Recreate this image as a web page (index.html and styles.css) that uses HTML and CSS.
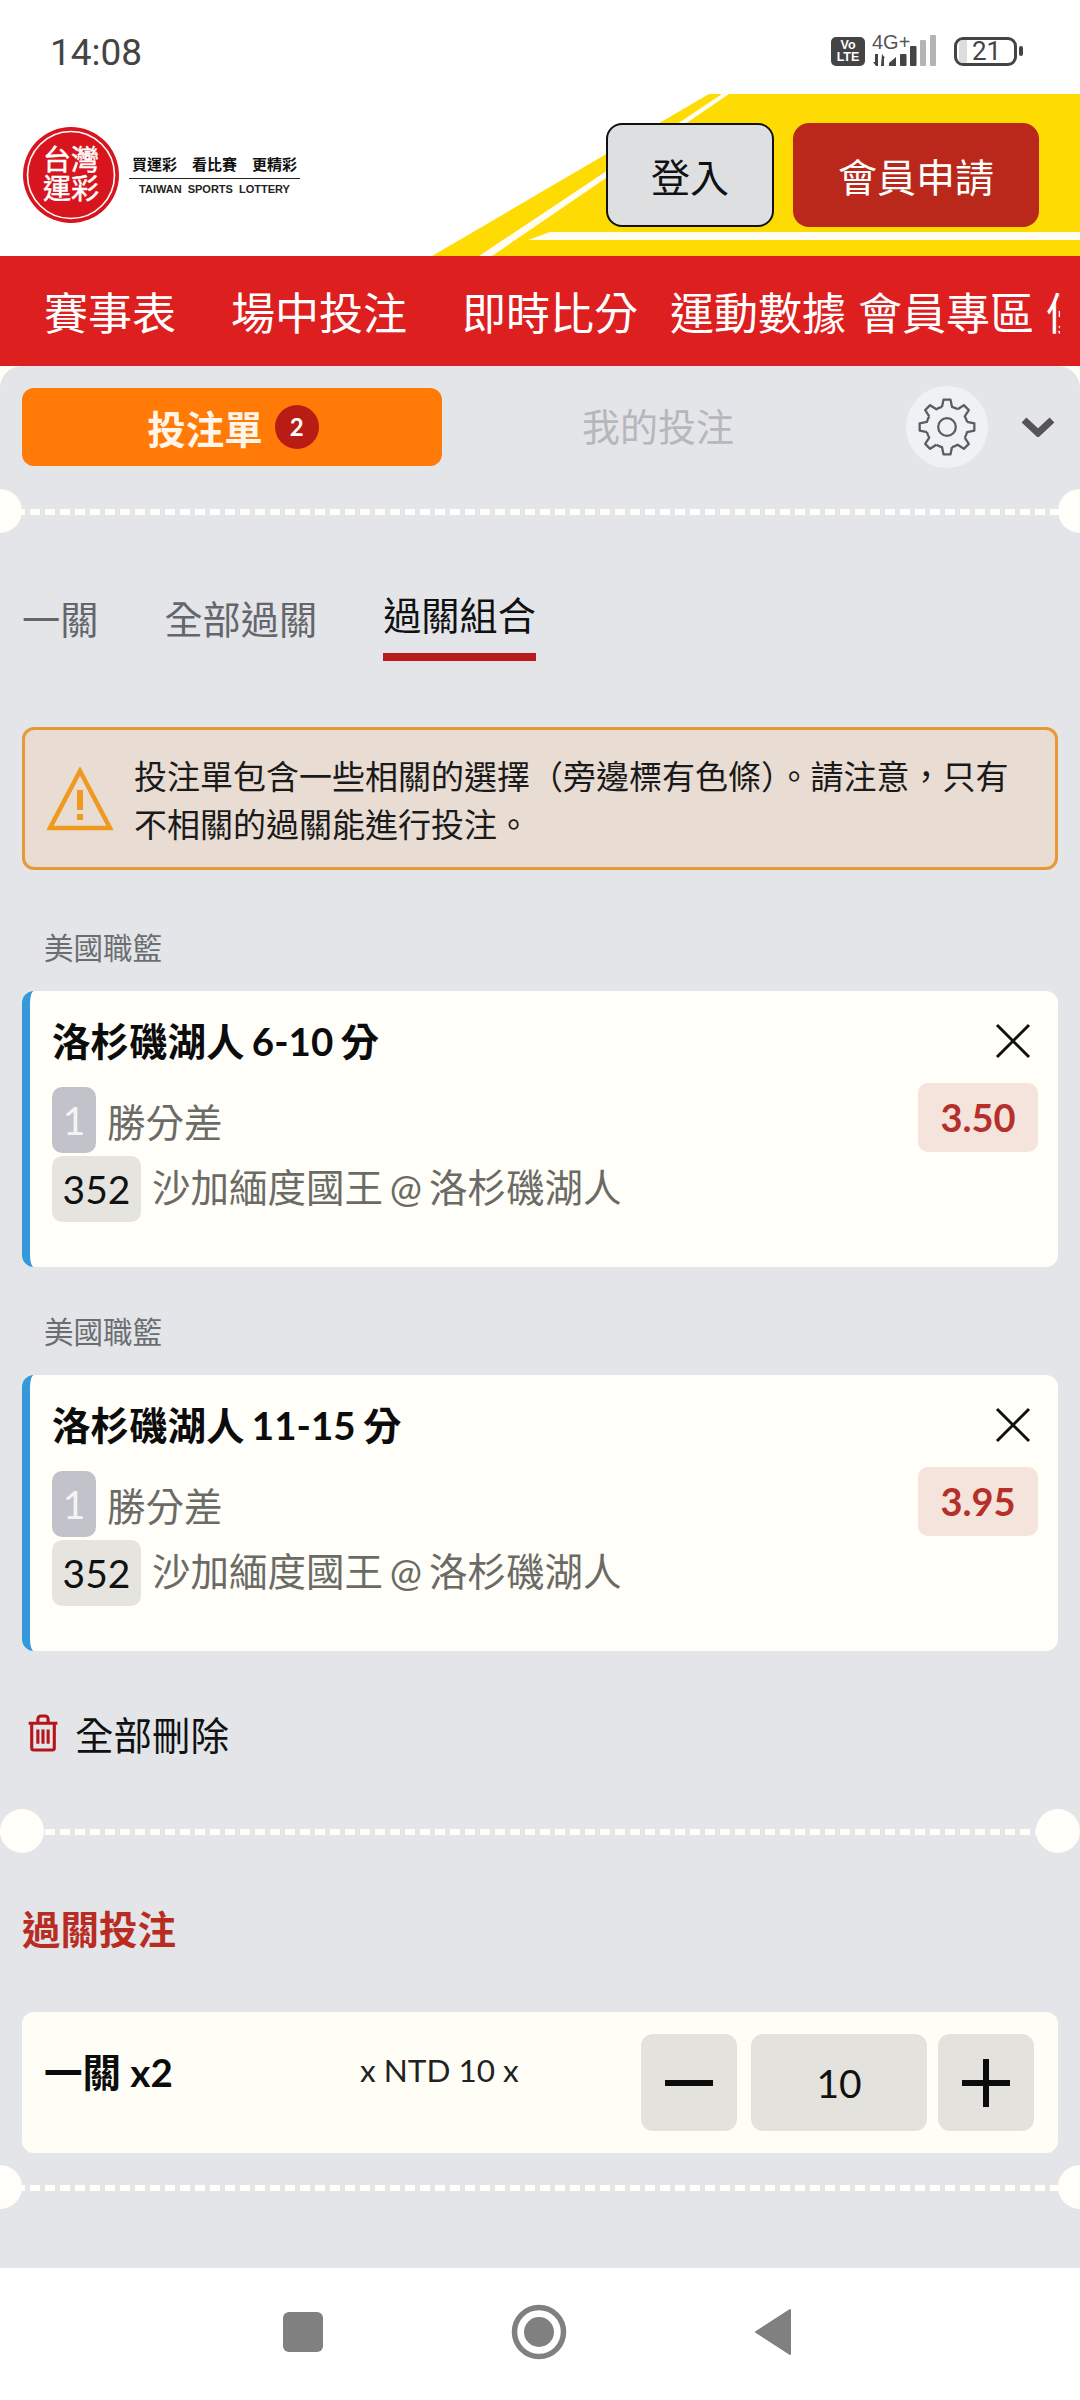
FILE: index.html
```html
<!DOCTYPE html>
<html lang="zh-Hant">
<head>
<meta charset="utf-8">
<title>投注單</title>
<link rel="stylesheet" href="styles.css">
</head>
<body>
<div class="phone">
  <div class="status">
    <span class="time">14:08</span>
    <div class="status-icons">
      <span class="volte">Vo<br>LTE</span>
      <svg class="signal" width="70" height="38" viewBox="0 -4 70 38">
        <text x="0" y="15" class="net">4G+</text>
        <path class="sig-dark" d="M3 20h3v12H4l-3-4h2zM10 20l3 4h-1v8h-3zM24 23v9h-7v-3z"/>
        <rect class="sig-dark" x="28" y="20" width="6.5" height="12" rx="1"/>
        <rect class="sig-dark" x="38" y="12" width="6.5" height="20" rx="1"/>
        <rect class="sig-gray" x="48" y="6" width="6" height="26" rx="1"/>
        <rect class="sig-gray" x="58" y="1" width="6" height="31" rx="1"/>
      </svg>
      <div class="battery"><span class="level"></span><span class="batt-num">21</span></div>
      <span class="nub"></span>
    </div>
  </div>

  <header class="head">
    <svg class="deco" width="1080" height="162" viewBox="0 0 1080 162">
      <path class="yellow" d="M709 0H1080V162H432Z"/>
      <path class="whiteish" d="M722 0H729L492 162H479Z"/>
      <path class="whiteish" d="M550 138H1080V146H528Z"/>
    </svg>
    <div class="logo">
      <svg class="seal" width="98" height="100" viewBox="0 0 98 100">
        <circle class="seal-bg" cx="49" cy="50" r="48"/>
        <circle class="seal-ring" cx="49" cy="50" r="43.5"/>
        <text class="seal-t" x="21" y="45">台灣</text>
        <text class="seal-t" x="21" y="74">運彩</text>
      </svg>
      <div class="tag">
        <div class="tag-cn"><span>買運彩</span><span>看比賽</span><span>更精彩</span></div>
        <div class="tag-en">TAIWAN SPORTS LOTTERY</div>
      </div>
    </div>
    <div class="auth">
      <a class="btn-login">登入</a>
      <a class="btn-join">會員申請</a>
    </div>
  </header>

  <nav class="nav">
    <a class="n1">賽事表</a>
    <a class="n2">場中投注</a>
    <a class="n3">即時比分</a>
    <a class="n4">運動數據</a>
    <a class="n5">會員專區</a>
    <a class="n6">優惠</a>
  </nav>

  <main class="main">
    <div class="topbar">
      <div class="tab-slip">投注單<span class="badge">2</span></div>
      <div class="tab-mine">我的投注</div>
      <div class="gear">
        <svg width="58" height="58" viewBox="0 0 56 56">
          <defs><path id="tooth" d="M23.16 8.6 24.6 1.6H31.4L32.84 8.6A20 20 0 0 1 38.3 10.86"/></defs>
          <g class="gear-line">
            <use href="#tooth"/>
            <use href="#tooth" transform="rotate(45 28 28)"/>
            <use href="#tooth" transform="rotate(90 28 28)"/>
            <use href="#tooth" transform="rotate(135 28 28)"/>
            <use href="#tooth" transform="rotate(180 28 28)"/>
            <use href="#tooth" transform="rotate(225 28 28)"/>
            <use href="#tooth" transform="rotate(270 28 28)"/>
            <use href="#tooth" transform="rotate(315 28 28)"/>
            <circle cx="28" cy="28" r="8.5"/>
          </g>
        </svg>
      </div>
      <svg class="chev" width="34" height="20" viewBox="0 0 34 20"><path d="M3 3 17 16 31 3"/></svg>
    </div>

    <div class="sep sep-edge sep-top"></div>

    <div class="tabs">
      <a class="tab">一關</a>
      <a class="tab">全部過關</a>
      <a class="tab tab-active">過關組合</a>
    </div>

    <div class="warn">
      <svg class="warn-ico" width="66" height="64" viewBox="0 0 66 64">
        <path class="warn-tri" d="M33 4 63 61H3Z"/>
        <rect class="warn-fill" x="30" y="23" width="6" height="20"/>
        <rect class="warn-fill" x="30" y="47" width="6" height="6"/>
      </svg>
      <p class="warn-text">投注單包含一些相關的選擇（旁邊標有色條）。請注意，只有不相關的過關能進行投注。</p>
    </div>

    <div class="league first">美國職籃</div>
    <section class="slip">
      <div class="slip-title">洛杉磯湖人 6-10 分</div>
      <svg class="close" width="36" height="36" viewBox="0 0 36 36"><path d="M2 2 34 34M34 2 2 34"/></svg>
      <div class="slip-row r1"><span class="pill pill-g">1</span><span class="slip-txt">勝分差</span><span class="odds">3.50</span></div>
      <div class="slip-row r2"><span class="pill pill-n">352</span><span class="slip-txt">沙加緬度國王 @ 洛杉磯湖人</span></div>
    </section>

    <div class="league">美國職籃</div>
    <section class="slip">
      <div class="slip-title">洛杉磯湖人 11-15 分</div>
      <svg class="close" width="36" height="36" viewBox="0 0 36 36"><path d="M2 2 34 34M34 2 2 34"/></svg>
      <div class="slip-row r1"><span class="pill pill-g">1</span><span class="slip-txt">勝分差</span><span class="odds">3.95</span></div>
      <div class="slip-row r2"><span class="pill pill-n">352</span><span class="slip-txt">沙加緬度國王 @ 洛杉磯湖人</span></div>
    </section>

    <div class="delete">
      <svg class="trash" width="34" height="38" viewBox="0 0 32 37">
        <path d="M2 9H30M11 9V5a3 3 0 0 1 3-3h4a3 3 0 0 1 3 3V9M5 9V33a2 2 0 0 0 2 2H25a2 2 0 0 0 2-2V9M11 15V29M16 15V29M21 15V29"/>
      </svg>
      <span>全部刪除</span>
    </div>

    <div class="sep sep-full"></div>

    <h2 class="parlay">過關投注</h2>

    <div class="stake">
      <div class="stake-name">一關 x2</div>
      <div class="stake-mid">x NTD 10 x</div>
      <div class="stake-ctl">
        <span class="step step-minus"><svg width="50" height="50" viewBox="0 0 50 50"><path d="M1 25H49"/></svg></span>
        <span class="amount">10</span>
        <span class="step step-plus"><svg width="50" height="50" viewBox="0 0 50 50"><path d="M1 25H49M25 1V49"/></svg></span>
      </div>
    </div>

    <div class="sep sep-edge sep-bot"></div>
  </main>

  <footer class="sysnav">
    <span class="sq"></span>
    <svg class="home" width="56" height="56" viewBox="0 0 56 56"><circle class="home-o" cx="28" cy="28" r="24.5"/><circle class="home-i" cx="28" cy="28" r="15"/></svg>
    <svg class="back" width="38" height="48" viewBox="0 0 38 48"><path d="M36 2V46L2 24Z"/></svg>
  </footer>
</div>
</body>
</html>
```
FILE: styles.css
```css
* { box-sizing: border-box; }
html, body { margin: 0; padding: 0; }
body {
  width: 1080px;
  height: 2400px;
  overflow: hidden;
  background: #fff;
  font-family: Lato, "Noto Sans CJK TC", sans-serif;
  color: #111;
}
.phone { width: 1080px; height: 2400px; display: flex; flex-direction: column; background: #fff; }

/* status bar */
.status { height: 94px; flex: none; padding: 0 57px 0 50px; display: flex; align-items: center; justify-content: space-between; }
.time { font: 400 37px/1 Roboto, sans-serif; color: #444; margin-top: 10px; }
.status-icons { display: flex; align-items: center; margin-top: 8px; }
.volte { width: 34px; height: 29px; border-radius: 5px; background: #444; color: #fff; font: 700 12.5px/12.5px "Liberation Sans", sans-serif; text-align: center; padding-top: 2px; margin-right: 7px; }
.signal { margin-right: 12px; margin-top: -4px; }
.net { font: 400 20px "Liberation Sans", sans-serif; fill: #555; }
.sig-dark { fill: #444; }
.sig-gray { fill: #b4b4b4; }
.battery { width: 63px; height: 29px; border: 3px solid #444; border-radius: 9px; display: flex; align-items: center; justify-content: center; padding: 3px 0; overflow: hidden; }
.level { width: 8px; height: 23px; background: #ddd; flex: none; margin-left: 2px; }
.batt-num { font: 400 26px/1 Roboto, sans-serif; color: #444; flex: 1; text-align: center; padding-right: 8px; }
.nub { width: 4px; height: 10px; background: #444; border-radius: 2px; margin-left: 2px; }

/* header */
.head { height: 162px; flex: none; position: relative; display: flex; align-items: center; justify-content: space-between; padding: 0 41px 0 22px; }
.deco { position: absolute; left: 0; top: 0; }
.yellow { fill: #fedb03; }
.whiteish { fill: #fffdf2; }
.logo { display: flex; align-items: center; position: relative; margin-top: -1px; }
.seal { display: block; }
.seal-bg { fill: #d8141e; }
.seal-ring { fill: none; stroke: #fff; stroke-width: 1.6; }
.seal-t { font: 400 28px "Noto Sans CJK TC", sans-serif; fill: #fff; stroke: #fff; stroke-width: .5; }
.tag { margin-left: 9px; width: 171px; }
.tag-cn { display: flex; justify-content: space-between; padding: 0 3px 4px; font: 700 15px/20px "Noto Sans CJK TC", sans-serif; color: #111; border-bottom: 1.5px solid #222; }
.tag-en { font: 700 11px/14px "Liberation Sans", sans-serif; color: #222; text-align: center; word-spacing: 3px; margin-top: 3px; }
.auth { display: flex; gap: 19px; position: relative; }
.btn-login, .btn-join { height: 104px; border-radius: 16px; display: flex; align-items: center; justify-content: center; font: 400 39px "Noto Sans CJK TC", sans-serif; }
.btn-login { width: 168px; background: #dddfe1; border: 2.5px solid #111; color: #111; }
.btn-join { width: 246px; background: #b9281a; color: #fff; }

/* nav */
.nav { height: 110px; flex: none; background: #dd1f20; display: flex; align-items: center; overflow: hidden; padding-left: 44px; white-space: nowrap; }
.nav a { color: #fff; font: 400 44px "Noto Sans CJK TC", sans-serif; flex: none; }
.n1 { margin-right: 55px; }
.n2 { margin-right: 55px; }
.n3 { margin-right: 32px; }
.n4 { margin-right: 12px; }
.n5 { margin-right: 12px; }
.n6 { clip-path: inset(0 calc(100% - 14px) 0 0); }

/* main */
.main { flex: 1; position: relative; overflow: hidden; background: #fffef8; }
.main::before { content: ""; position: absolute; inset: 0; background: #e3e5e9; border-radius: 22px 22px 0 0; }
.main > * { position: relative; margin-left: 22px; margin-right: 22px; }

.topbar { display: flex; align-items: center; height: 82px; margin-top: 20px; }
.tab-slip { width: 420px; height: 78px; padding-left: 2px; background: #ff7a06; border-radius: 12px; display: flex; align-items: center; justify-content: center; color: #fff5e8; font: 700 38.5px "Noto Sans CJK TC", sans-serif; line-height: 74px; }
.badge { width: 44px; height: 44px; border-radius: 50%; background: #b81c14; color: #fff; font: 700 24px/44px Lato, sans-serif; text-align: center; margin-left: 12px; }
.tab-mine { margin-left: 140px; color: #b5b7ba; font: 400 38px/74px "Noto Sans CJK TC", sans-serif; margin-bottom: 4px; }
.gear { width: 82px; height: 82px; border-radius: 50%; background: #eff1f5; margin-left: auto; display: flex; align-items: center; justify-content: center; }
.gear-line { fill: none; stroke: #5a5d62; stroke-width: 2.2; stroke-linejoin: round; }
.chev { margin-left: 33px; margin-right: 3px; }
.chev path { fill: none; stroke: #555; stroke-width: 7; }

.sep { height: 6px; background: repeating-linear-gradient(90deg, #fffef8 0 10px, transparent 10px 15px); }
.sep::before, .sep::after { content: ""; position: absolute; top: -20px; width: 44px; height: 44px; border-radius: 50%; background: #fffef8; }
.sep-edge { margin-left: 0; margin-right: 0; }
.sep-edge::before { left: -22px; }
.sep-edge::after { right: -22px; }
.sep-full { margin-left: 0; margin-right: 0; }
.sep-full::before { left: 0; }
.sep-full::after { right: 0; }
.sep-top { margin-top: 41px; }

.tabs { display: flex; gap: 66px; margin-top: 73px; align-items: flex-start; }
.tab { font: 400 38.2px/52px "Noto Sans CJK TC", sans-serif; color: #63666a; padding-top: 4px; }
.tab-active { color: #111; padding: 0 0 13px; border-bottom: 8px solid #b81c1c; }

.warn { display: flex; align-items: center; height: 143px; margin-top: 66px; padding: 0 30px 0 22px; background: #e8dcd3; border: 3px solid #e59a35; border-radius: 12px; }
.warn-ico { flex: none; }
.warn-tri { fill: none; stroke: #ef9a1f; stroke-width: 4.5; stroke-linejoin: miter; }
.warn-fill { fill: #ef9a1f; }
.warn-text { margin: 0 0 0 21px; font: 400 33px/48px "Noto Sans CJK TC", sans-serif; color: #1a1a1a; }

.league { font: 400 29.5px/40px "Noto Sans CJK TC", sans-serif; color: #6b6e70; margin-left: 44px; margin-top: 43px; height: 40px; }
.league.first { margin-top: 56px; }
.slip { position: relative; height: 276px; margin-top: 25px; background: #fffef8; border-left: 8px solid #3498db; border-radius: 12px; padding: 28px 20px 0 22px; }
.slip-title { font: 700 38.5px/44px Lato, "Noto Sans CJK TC", sans-serif; color: #0c0c0c; word-spacing: -2px; }
.close { position: absolute; top: 32px; right: 27px; }
.close path { fill: none; stroke: #111; stroke-width: 3; }
.slip-row { display: flex; align-items: center; height: 66px; }
.r1 { margin-top: 24px; }
.r2 { margin-top: 3px; }
.pill { height: 66px; border-radius: 10px; display: flex; align-items: center; justify-content: center; font: 400 39px Lato, sans-serif; flex: none; }
.pill-g { width: 44px; background: #c1c2ca; color: #f4f4f4; }
.pill-n { width: 89px; background: #e6e4de; color: #111; }
.slip-txt { font: 400 38.5px/50px Lato, "Noto Sans CJK TC", sans-serif; color: #6b6b66; margin-left: 11px; margin-bottom: 4px; word-spacing: -3px; }
.r1 .slip-txt { margin-top: 4px; margin-bottom: 0; }
.odds { margin-left: auto; width: 120px; height: 69px; margin-top: -6px; background: #f5e4dc; color: #b5302a; border-radius: 10px; display: flex; align-items: center; justify-content: center; font: 700 38px Lato, sans-serif; }

.delete { display: flex; align-items: center; height: 40px; margin-top: 62px; margin-left: 26px; }
.trash { flex: none; }
.trash path { fill: none; stroke: #b3151a; stroke-width: 3; }
.delete span { font: 400 38.5px "Noto Sans CJK TC", sans-serif; color: #111; margin-left: 15px; }

.sep-full { margin-top: 76px; }

.parlay { margin-top: 69px; margin-bottom: 0; font: 700 38.5px/46px "Noto Sans CJK TC", sans-serif; color: #b82c22; }

.stake { display: flex; align-items: center; height: 141px; margin-top: 62px; background: #fffef6; border-radius: 12px; padding: 0 24px 0 22px; }
.stake-name { font: 700 38.5px Lato, "Noto Sans CJK TC", sans-serif; color: #0c0c0c; width: 316px; margin-top: -26px; }
.stake-mid { font: 400 31.5px Lato, sans-serif; color: #222; margin-top: -26px; width: 281px; }
.stake-ctl { display: flex; margin-left: auto; }
.step { width: 96px; height: 97px; border-radius: 12px; background: #e4e2dc; display: flex; align-items: center; justify-content: center; }
.step path { fill: none; stroke: #0c0c0c; stroke-width: 6; }
.step-minus { margin-right: 14px; }
.step-plus { margin-left: 11px; }
.amount { width: 176px; height: 97px; border-radius: 12px; background: #e4e2dc; display: flex; align-items: center; justify-content: center; font: 400 39px Lato, sans-serif; color: #111; }
.sep-bot { margin-top: 32px; }

/* system nav */
.sysnav { height: 132px; flex: none; background: #fff; display: flex; align-items: center; padding: 0 0 4px 283px; }
.sq { width: 40px; height: 40px; border-radius: 6px; background: #808080; }
.home { margin-left: 188px; }
.home-o { fill: none; stroke: #808080; stroke-width: 5.5; }
.home-i { fill: #808080; }
.back { margin-left: 187px; }
.back path { fill: #808080; stroke: #808080; stroke-width: 2; stroke-linejoin: round; }
```
